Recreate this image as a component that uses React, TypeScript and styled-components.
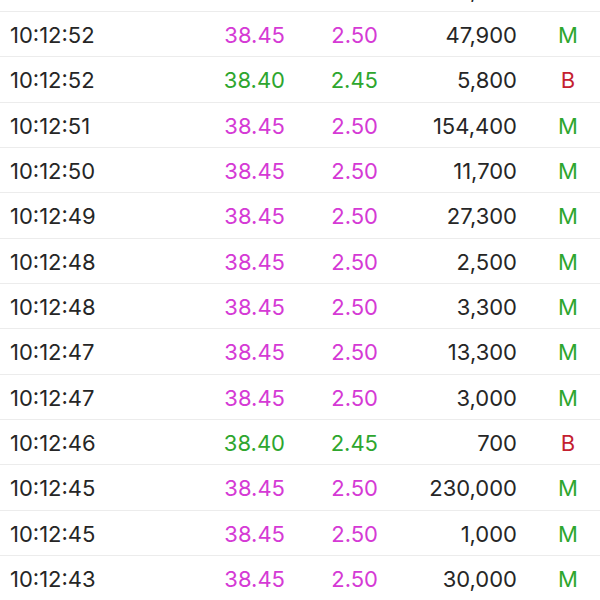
import React from "react";
import styled, { createGlobalStyle } from "styled-components";

const Global = createGlobalStyle`
  html, body { margin: 0; padding: 0; background: #ffffff; }
  body { font-family: Inter, "Noto Sans", "Liberation Sans", sans-serif; }
`;

type Kind = "M" | "B";
type Trade = { time: string; price: string; change: string; volume: string; kind: Kind };

const trades: Trade[] = [
  { time: "10:12:53", price: "38.45", change: "2.50", volume: "12,300", kind: "M" },
  { time: "10:12:52", price: "38.45", change: "2.50", volume: "47,900", kind: "M" },
  { time: "10:12:52", price: "38.40", change: "2.45", volume: "5,800", kind: "B" },
  { time: "10:12:51", price: "38.45", change: "2.50", volume: "154,400", kind: "M" },
  { time: "10:12:50", price: "38.45", change: "2.50", volume: "11,700", kind: "M" },
  { time: "10:12:49", price: "38.45", change: "2.50", volume: "27,300", kind: "M" },
  { time: "10:12:48", price: "38.45", change: "2.50", volume: "2,500", kind: "M" },
  { time: "10:12:48", price: "38.45", change: "2.50", volume: "3,300", kind: "M" },
  { time: "10:12:47", price: "38.45", change: "2.50", volume: "13,300", kind: "M" },
  { time: "10:12:47", price: "38.45", change: "2.50", volume: "3,000", kind: "M" },
  { time: "10:12:46", price: "38.40", change: "2.45", volume: "700", kind: "B" },
  { time: "10:12:45", price: "38.45", change: "2.50", volume: "230,000", kind: "M" },
  { time: "10:12:45", price: "38.45", change: "2.50", volume: "1,000", kind: "M" },
  { time: "10:12:43", price: "38.45", change: "2.50", volume: "30,000", kind: "M" },
];

const MAGENTA = "#d53ad5";
const GREEN = "#2ea62e";
const RED = "#c42030";

const List = styled.div`
  margin-top: -33.33px;
  height: 633px;
  overflow: hidden;
`;

const Row = styled.div`
  box-sizing: border-box;
  height: 45.33px;
  display: grid;
  grid-template-columns: 190px 85px 93px 139px 1fr;
  align-items: center;
  padding: 2px 0 0 10px;
  border-bottom: 1px solid #ececec;
  font-size: 22px;
  font-weight: 400;
`;

const Time = styled.span`
  color: #262626;
`;

const Num = styled.span<{ $up?: boolean }>`
  text-align: right;
  color: ${(p) => (p.$up ? MAGENTA : GREEN)};
`;

const Volume = styled.span`
  text-align: right;
  color: #262626;
`;

const Flag = styled.span<{ $kind: Kind }>`
  padding-left: 19px;
  text-align: center;
  color: ${(p) => (p.$kind === "M" ? GREEN : RED)};
`;

export default function App() {
  return (
    <>
      <Global />
      <List>
        {trades.map((t, i) => {
          const up = t.price === "38.45";
          return (
            <Row key={i}>
              <Time>{t.time}</Time>
              <Num $up={up}>{t.price}</Num>
              <Num $up={up}>{t.change}</Num>
              <Volume>{t.volume}</Volume>
              <Flag $kind={t.kind}>{t.kind}</Flag>
            </Row>
          );
        })}
      </List>
    </>
  );
}
